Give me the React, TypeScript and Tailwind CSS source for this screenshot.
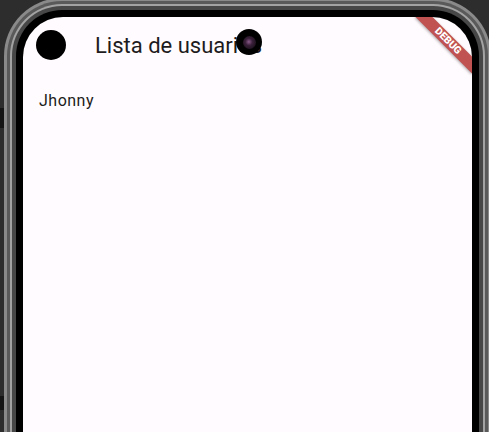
import React from 'react';

// phone screen with the flutter app inside
function Screen() {
  return (
    <div className="relative h-full rounded-[40px] overflow-hidden bg-[#fffbfe]">
      <div className="flex items-center h-[56px]">
        <div className="w-[56px] flex justify-center">
          <div className="w-[30px] h-[30px] rounded-full bg-black" />
        </div>
        <span className="ml-[16px] text-[22px] text-[#1d1b20] whitespace-nowrap">Lista de usuarios</span>
      </div>

      <div className="flex items-center h-[56px] px-[16px] text-[16px] tracking-[0.5px] text-[#1d1b20]">
        Jhonny
      </div>

      {/* camera punch hole */}
      <div className="absolute left-[213px] top-[12px] w-[26px] h-[26px] rounded-full bg-black flex items-center justify-center">
        <div className="w-[13px] h-[13px] rounded-full bg-[radial-gradient(circle_at_45%_45%,#8a5a8a_0%,#3a203a_35%,#0c0a0c_100%)]" />
      </div>

      {/* debug banner */}
      <div className="absolute left-[385px] top-[18px] w-[80px] h-[12px] rotate-45 bg-[#c05252] shadow-[0_1px_3px_rgba(0,0,0,0.35)] text-white text-[10.2px] font-black leading-[12px] text-center">
        DEBUG
      </div>
    </div>
  );
}

export default function App() {
  return (
    <div className="relative w-[489px] h-[432px] overflow-hidden bg-[#2d2d2d] font-['Roboto',sans-serif]">
      <div className="ml-[4px] mt-[-2px] w-[487px] h-[520px] rounded-[58px] bg-[#8a8a8a] p-[3px]">
        <div className="h-full rounded-[55px] bg-[#5a5a5a] p-[3px]">
          <div className="h-full rounded-[52px] bg-[#a3a3a3] p-[2px]">
            <div className="h-full rounded-[50px] bg-[#474747] p-[4px]">
              <div className="h-full rounded-[46px] bg-black p-[7px]">
                <Screen />
              </div>
            </div>
          </div>
        </div>
      </div>
      {/* side buttons */}
      <div className="absolute left-0 top-[108px] w-[4px] h-[20px] bg-[#151515]" />
      <div className="absolute left-0 top-[396px] w-[4px] h-[14px] bg-[#151515]" />
    </div>
  );
}
